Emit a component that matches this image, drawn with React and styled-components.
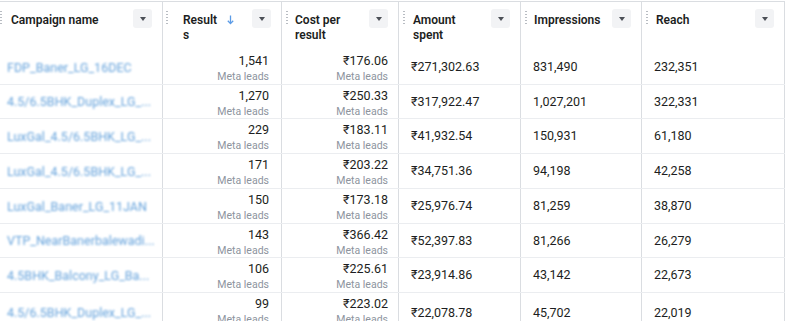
import React from "react";
import styled, { createGlobalStyle } from "styled-components";

const Global = createGlobalStyle`
  html, body { margin: 0; padding: 0; background: #fff; }
  body { font-family: Roboto, "Noto Sans", Arial, sans-serif; color: #1c1e21; }
`;

const COLS = "163px 119px 117px 122px 121px 143px";

const Table = styled.div`
  width: 785px;
  padding-top: 1px;
`;

const HeaderRow = styled.div`
  display: grid;
  grid-template-columns: ${COLS};
  height: 48px;
  border-top: 1px solid #dadde1;
`;

const Row = styled.div`
  display: grid;
  grid-template-columns: ${COLS};
  height: ${(p) => p.$h}px;
  box-sizing: border-box;
  border-bottom: 1px solid #ebedf0;
`;

const HeaderCell = styled.div`
  position: relative;
  display: flex;
  align-items: flex-start;
  padding: 8px 10px 0 ${(p) => p.$pl}px;
  border-right: 1px solid #dadde1;
  box-sizing: border-box;
`;

const Grip = styled.span`
  position: absolute;
  left: ${(p) => p.$left}px;
  top: 8px;
  width: 2px;
  height: 15px;
  background-image: radial-gradient(circle, #b8bcc2 0.9px, transparent 1px);
  background-size: 2px 3px;
`;

const HeaderLabel = styled.div`
  flex: 1;
  font-size: 12px;
  font-weight: 600;
  line-height: 15px;
  color: #1c1e21;
  padding-top: 3px;
  display: flex;
  align-items: flex-start;
  gap: 7px;
`;

const Wrap = styled.span`
  display: inline-block;
  width: ${(p) => p.$w}px;
  word-break: ${(p) => (p.$breakAll ? "break-all" : "normal")};
`;

const SortArrow = styled.svg`
  flex: none;
  margin-top: 2px;
`;

const DropButton = styled.span`
  flex: none;
  width: 19px;
  height: 19px;
  margin-top: -1px;
  border-radius: 3px;
  background: #f2f3f5;
  display: flex;
  align-items: center;
  justify-content: center;
`;

const Caret = styled.span`
  width: 0;
  height: 0;
  border-left: 3.5px solid transparent;
  border-right: 3.5px solid transparent;
  border-top: 4px solid #4b4f56;
`;

const NameCell = styled.div`
  display: flex;
  align-items: center;
  padding-left: 7px;
  border-right: 1px solid #dadde1;
  overflow: hidden;
`;

const NameLink = styled.span`
  font-size: 12.5px;
  color: #66a3dc;
  white-space: nowrap;
  filter: blur(1px);
`;

const MetricCell = styled.div`
  display: flex;
  flex-direction: column;
  justify-content: ${(p) => (p.$stack ? "flex-start" : "center")};
  align-items: ${(p) => (p.$right ? "flex-end" : "flex-start")};
  padding: ${(p) => (p.$stack ? "3px" : "0")} ${(p) => p.$pr || 0}px 0 ${(p) => p.$pl || 0}px;
  border-right: 1px solid #dadde1;
  overflow: hidden;
`;

const Value = styled.span`
  font-size: 12.5px;
  line-height: 16px;
  color: #1c1e21;
`;

const Sub = styled.span`
  font-size: 10.5px;
  line-height: 15px;
  color: #8d949e;
`;

const headers = [
  { label: "Campaign name", pl: 11, grip: 0 },
  { label: "Results", wrapW: 37, breakAll: true, pl: 20, grip: 3, sort: true },
  { label: "Cost per result", wrapW: 54, pl: 13, grip: 4 },
  { label: "Amount spent", wrapW: 56, pl: 14, grip: 4 },
  { label: "Impressions", pl: 13, grip: 4 },
  { label: "Reach", pl: 14, grip: 4 },
];

const rows = [
  ["FDP_Baner_LG_16DEC", "1,541", "₹176.06", "₹271,302.63", "831,490", "232,351"],
  ["4.5/6.5BHK_Duplex_LG_...", "1,270", "₹250.33", "₹317,922.47", "1,027,201", "322,331"],
  ["LuxGal_4.5/6.5BHK_LG_...", "229", "₹183.11", "₹41,932.54", "150,931", "61,180"],
  ["LuxGal_4.5/6.5BHK_LG_...", "171", "₹203.22", "₹34,751.36", "94,198", "42,258"],
  ["LuxGal_Baner_LG_11JAN", "150", "₹173.18", "₹25,976.74", "81,259", "38,870"],
  ["VTP_NearBanerbalewadi...", "143", "₹366.42", "₹52,397.83", "81,266", "26,279"],
  ["4.5BHK_Balcony_LG_Ba...", "106", "₹225.61", "₹23,914.86", "43,142", "22,673"],
  ["4.5/6.5BHK_Duplex_LG_...", "99", "₹223.02", "₹22,078.78", "45,702", "22,019"],
];

const heights = [35, 34, 35, 35, 35, 34, 35, 40];

function Header({ h }) {
  return (
    <HeaderCell $pl={h.pl}>
      <Grip $left={h.grip} />
      <HeaderLabel>
        {h.wrapW ? (
          <Wrap $w={h.wrapW} $breakAll={h.breakAll}>
            {h.label}
          </Wrap>
        ) : (
          <span>{h.label}</span>
        )}
        {h.sort && (
          <SortArrow width="7" height="10" viewBox="0 0 7 10">
            <path d="M3.5 0.5v8M0.8 5.8l2.7 2.8 2.7-2.8" stroke="#5b9be6" strokeWidth="1.3" fill="none" />
          </SortArrow>
        )}
      </HeaderLabel>
      <DropButton>
        <Caret />
      </DropButton>
    </HeaderCell>
  );
}

export default function App() {
  return (
    <>
      <Global />
      <Table>
        <HeaderRow>
          {headers.map((h) => (
            <Header key={h.label} h={h} />
          ))}
        </HeaderRow>
        {rows.map((r, i) => (
          <Row key={i} $h={heights[i]}>
            <NameCell>
              <NameLink>{r[0]}</NameLink>
            </NameCell>
            <MetricCell $right $stack $pr={12}>
              <Value>{r[1]}</Value>
              <Sub>Meta leads</Sub>
            </MetricCell>
            <MetricCell $right $stack $pr={10}>
              <Value>{r[2]}</Value>
              <Sub>Meta leads</Sub>
            </MetricCell>
            <MetricCell $pl={12}>
              <Value>{r[3]}</Value>
            </MetricCell>
            <MetricCell $pl={12}>
              <Value>{r[4]}</Value>
            </MetricCell>
            <MetricCell $pl={12}>
              <Value>{r[5]}</Value>
            </MetricCell>
          </Row>
        ))}
      </Table>
    </>
  );
}
